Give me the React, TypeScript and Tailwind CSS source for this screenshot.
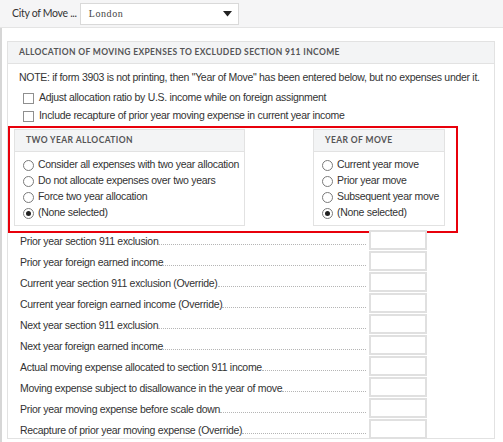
import React from "react";

const rows = [
  "Prior year section 911 exclusion",
  "Prior year foreign earned income",
  "Current year section 911 exclusion (Override)",
  "Current year foreign earned income (Override)",
  "Next year section 911 exclusion",
  "Next year foreign earned income",
  "Actual moving expense allocated to section 911 income",
  "Moving expense subject to disallowance in the year of move",
  "Prior year moving expense before scale down",
  "Recapture of prior year moving expense (Override)",
];

const twoYear = [
  "Consider all expenses with two year allocation",
  "Do not allocate expenses over two years",
  "Force two year allocation",
  "(None selected)",
];

const yearOfMove = ["Current year move", "Prior year move", "Subsequent year move", "(None selected)"];

function Radio({ label, checked }: { label: string; checked?: boolean }) {
  return (
    <div className="flex items-center h-[16px]">
      <span className="w-[11px] h-[11px] rounded-full border border-[#7a7a7a] bg-white flex items-center justify-center shrink-0">
        {checked && <span className="w-[5px] h-[5px] rounded-full bg-[#222]" />}
      </span>
      <span className="ml-[4px] text-[10.5px] tracking-[-0.3px] text-[#333] whitespace-nowrap">{label}</span>
    </div>
  );
}

function Checkbox({ label }: { label: string }) {
  return (
    <div className="flex items-center h-[18px] pl-[15px]">
      <span className="w-[11px] h-[11px] border border-[#8f8f8f] bg-white shrink-0" />
      <span className="ml-[5px] text-[10.5px] tracking-[-0.3px] text-[#333] whitespace-nowrap">{label}</span>
    </div>
  );
}

function SubPanel({ title, items, className }: { title: string; items: string[]; className: string }) {
  return (
    <div className={`border border-[#e2e2e2] bg-white h-[97px] ${className}`}>
      <div className="h-[22px] bg-[#f3f4f5] border-b border-[#e2e2e2] flex items-center px-[11px] font-['Lato'] font-bold text-[8.5px] tracking-[0.4px] text-[#555]">
        {title}
      </div>
      <div className="pt-[5px] pl-[8px]">
        {items.map((t, i) => (
          <Radio key={t} label={t} checked={i === items.length - 1} />
        ))}
      </div>
    </div>
  );
}

export default function App() {
  return (
    <div className="w-[503px] h-[442px] bg-white overflow-hidden font-['Liberation_Sans',Arial,sans-serif]">
      <div className="h-[28px] bg-[#f5f5f6] border-b border-[#e4e4e4] flex items-center pl-[12px]">
        <span className="font-['Lato'] text-[10.5px] text-[#333] tracking-[-0.3px] whitespace-nowrap">City of Move ...</span>
        <div className="ml-[3px] w-[159px] h-[22px] bg-white border border-[#d9d9d9] flex items-center justify-between pl-[8px] pr-[6px]">
          <span className="font-['Liberation_Serif',serif] text-[10px] tracking-[0.6px] text-[#444]">London</span>
          <svg width="9" height="6" viewBox="0 0 9 6">
            <polygon points="0,0 9,0 4.5,5.5" fill="#222" />
          </svg>
        </div>
      </div>
      <div className="flex h-[414px]">
        <div className="w-[2px] bg-[#d6d6d6]" />
        <div className="pl-[5px] pt-[13px]">
          <div className="w-[488px] h-[398px] border border-[#e2e2e2]">
            <div className="h-[22px] bg-[#f3f4f5] border-b border-[#e2e2e2] flex items-center px-[11px] font-['Lato'] font-bold text-[8.5px] tracking-[0.35px] text-[#555] whitespace-nowrap">
              ALLOCATION OF MOVING EXPENSES TO EXCLUDED SECTION 911 INCOME
            </div>
            <div className="pl-[11px] pt-[5px] h-[22px] flex items-center text-[10.5px] tracking-[-0.3px] text-[#333] whitespace-nowrap">
              NOTE: if form 3903 is not printing, then "Year of Move" has been entered below, but no expenses under it.
            </div>
            <div className="pt-[3px]">
              <Checkbox label="Adjust allocation ratio by U.S. income while on foreign assignment" />
              <Checkbox label="Include recapture of prior year moving expense in current year income" />
            </div>
            <div className="mt-[1px] w-[450px] border-2 border-[#e8000b] pt-[1px] pb-[5px] flex">
              <SubPanel title="TWO YEAR ALLOCATION" items={twoYear} className="ml-[4px] w-[231px]" />
              <SubPanel title="YEAR OF MOVE" items={yearOfMove} className="ml-[68px] w-[132px]" />
            </div>
            <div className="-mt-[3px]">
              {rows.map((r) => (
                <div key={r} className="flex items-end h-[21px] pl-[12px]">
                  <span className="text-[10.5px] tracking-[-0.3px] text-[#333] leading-[14px] mb-[3px] whitespace-nowrap">{r}</span>
                  <span className="flex-1 border-b border-dotted border-[#b5b5b5] mb-[6px] mr-[3px]" />
                  <span className="w-[58px] h-[20px] border-2 border-[#e0e0e0] bg-white mb-[1px] mr-[67px]" />
                </div>
              ))}
            </div>
          </div>
        </div>
      </div>
    </div>
  );
}
